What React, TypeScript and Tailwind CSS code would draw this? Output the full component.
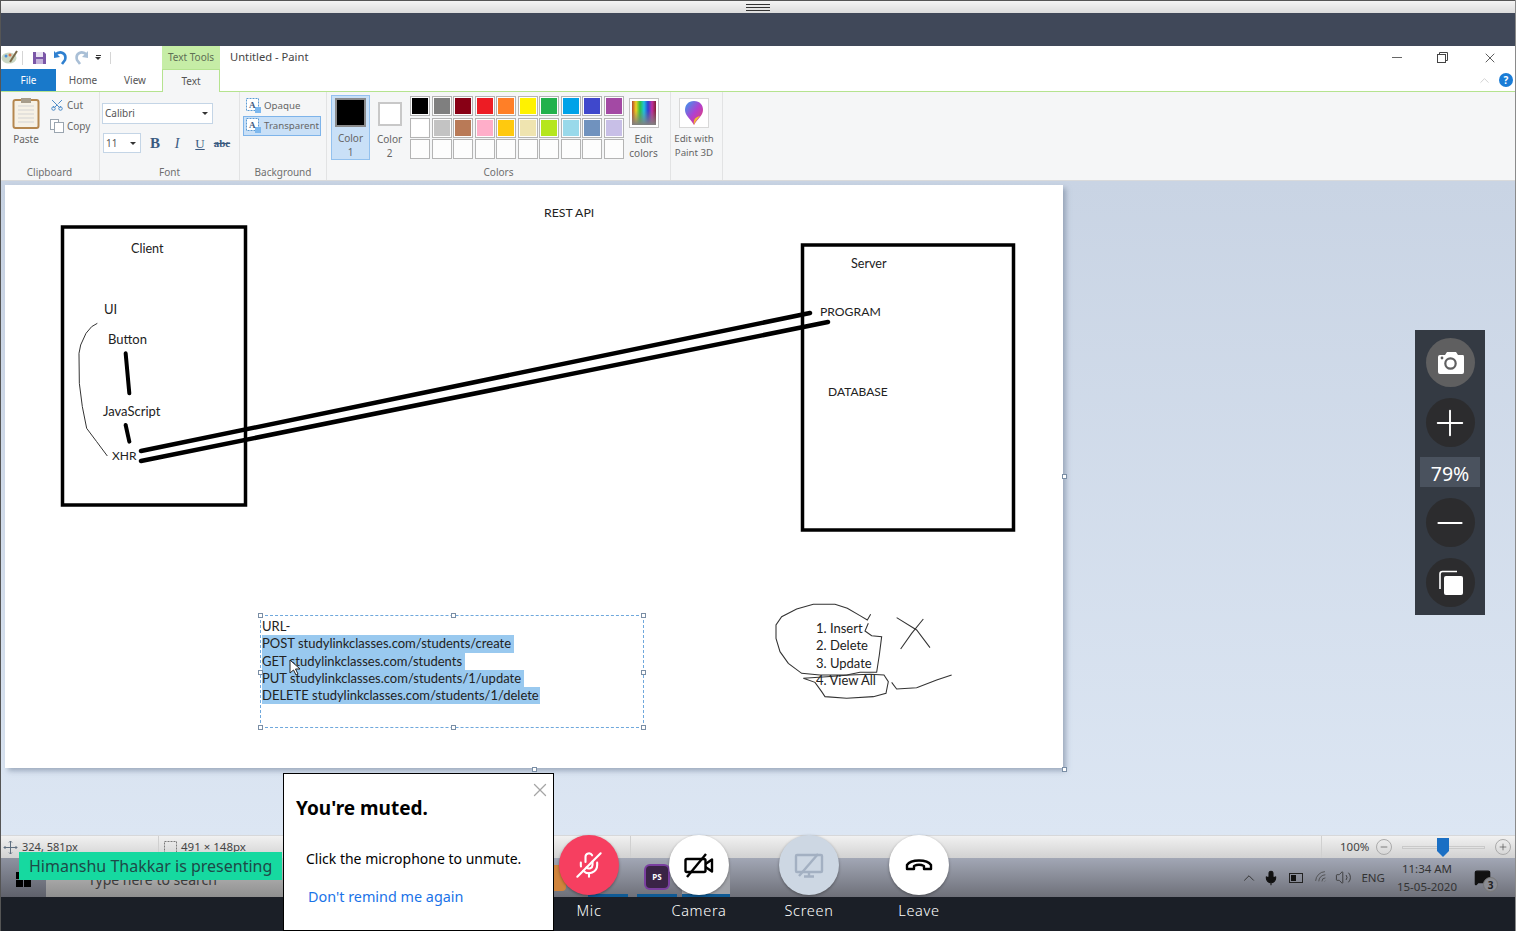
import { MicOff, Plus, Minus, X, Scissors, ChevronUp, Mic, Volume2, Wifi, MessageSquare } from "lucide-react";

const row1 = ["#000000", "#7f7f7f", "#880015", "#ed1c24", "#ff7f27", "#fff200", "#22b14c", "#00a2e8", "#3f48cc", "#a349a4"];
const row2 = ["#ffffff", "#c3c3c3", "#b97a57", "#ffaec9", "#ffc90e", "#efe4b0", "#b5e61d", "#99d9ea", "#7092be", "#c8bfe7"];
const row3 = Array.from({ length: 10 }, () => "");

function Swatch({ color }: { color: string }) {
  return (
    <div className="h-[20px] w-[20px] border border-[#b4b4b4] bg-[#fdfdfd] p-[1px]">
      {color && <div className="h-full w-full" style={{ background: color }}></div>}
    </div>
  );
}

function RibbonGroup({
  label,
  className,
  children,
}: {
  label: string;
  className: string;
  children: React.ReactNode;
}) {
  return (
    <div className={`relative h-full shrink-0 border-r border-[#e2e3e4] ${className}`}>
      <div className="h-[74px]">{children}</div>
      <div className="text-center text-[10px] leading-[13px] text-[#6f6f6f]">{label}</div>
    </div>
  );
}

function AIcon() {
  return (
    <svg width="16" height="16" viewBox="0 0 16 16" className="shrink-0">
      <rect x="0.5" y="0.5" width="12" height="12" fill="#fff" stroke="#5b9bd5" strokeDasharray="2 1" />
      <rect x="9" y="9" width="6" height="6" fill="#7db8ee" />
      <text x="3" y="10" fontSize="9" fontWeight="700" fill="#3d5a80" fontFamily="Liberation Serif">A</text>
    </svg>
  );
}

function TitleBar() {
  return (
    <div className="flex h-[23px] bg-white">
      <div className="flex w-[162px] items-center pl-[1px]">
        <svg width="17" height="15" viewBox="0 0 17 15">
          <ellipse cx="8" cy="8" rx="7.5" ry="5.5" fill="#c9d6c2" />
          <circle cx="5" cy="6" r="1.5" fill="#4a90d9" />
          <circle cx="9" cy="5" r="1.5" fill="#d9734a" />
          <path d="M9 12 L16 1" stroke="#7a6a4a" strokeWidth="2" />
        </svg>
        <div className="ml-[4px] h-[14px] w-[1px] bg-[#d5d5d5]"></div>
        <svg width="15" height="15" viewBox="0 0 15 15" className="ml-[9px]">
          <path d="M1 2 h11 l2 2 v10 h-13 z" fill="#7b57a8" />
          <rect x="4" y="2" width="7" height="5" fill="#e9e2f2" />
          <rect x="4" y="9" width="7" height="5" fill="#c4b3db" />
        </svg>
        <svg width="15" height="15" viewBox="0 0 15 15" className="ml-[6px]">
          <path d="M2 5 C7 0 14 3 12 10 L9 14" fill="none" stroke="#2f80d0" strokeWidth="2.6" />
          <path d="M1 1 L1 8 L7 7 Z" fill="#2f80d0" />
        </svg>
        <svg width="15" height="15" viewBox="0 0 15 15" className="ml-[6px]">
          <path d="M13 5 C8 0 1 3 3 10 L6 14" fill="none" stroke="#a9bfd6" strokeWidth="2.6" />
          <path d="M14 1 L14 8 L8 7 Z" fill="#a9bfd6" />
        </svg>
        <div className="ml-[6px] flex flex-col items-center gap-[1px]">
          <div className="h-[1px] w-[5px] bg-[#333]"></div>
          <div className="h-0 w-0 border-x-[3px] border-t-[3px] border-x-transparent border-t-[#333]"></div>
        </div>
        <div className="ml-[9px] h-[12px] w-[1px] bg-[#d5d5d5]"></div>
      </div>
      <div className="flex w-[58px] items-center justify-center bg-[#c6eda6] text-[10px] text-[#5f6f55]">Text Tools</div>
      <div className="ml-[10px] flex items-center text-[11.2px] text-[#444]">Untitled - Paint</div>
      <div className="ml-auto flex items-center text-[#444]">
        <div className="mr-[35px] h-[1px] w-[10px] bg-[#666]"></div>
        <svg width="11" height="11" viewBox="0 0 11 11" className="mr-[34px]" fill="none" stroke="#444">
          <rect x="0.5" y="2.5" width="8" height="8" />
          <path d="M2.5 2.5 v-2 h8 v8 h-2" />
        </svg>
        <X size={16} strokeWidth={1.3} className="mr-[18px]" />
      </div>
    </div>
  );
}

function TabRow() {
  return (
    <div className="flex h-[23px] border-b border-[#b5e38f] bg-white text-[10px] text-[#555]">
      <div className="ml-[1px] flex h-[22px] w-[55px] items-center justify-center bg-[#1979ca] text-white">File</div>
      <div className="flex w-[54px] items-center justify-center">Home</div>
      <div className="flex w-[50px] items-center justify-center">View</div>
      <div className="ml-[2px] flex h-[23px] w-[58px] items-center justify-center border-x border-t border-x-[#b5e38f] border-t-[#b5e38f] bg-[#f5f6f7]">
        Text
      </div>
      <div className="ml-auto flex items-center">
        <ChevronUp size={15} strokeWidth={1.2} className="mr-[7px] text-[#c4c4c4]" />
        <div className="mr-[3px] flex h-[14px] w-[14px] items-center justify-center rounded-full bg-[#1a7cd6] text-[10px] font-bold text-white">
          ?
        </div>
      </div>
    </div>
  );
}

function Ribbon() {
  return (
    <div className="flex h-[89px] border-b border-[#d9dadb] bg-[#f5f6f7] text-[10px] text-[#666]">
      <RibbonGroup label="Clipboard" className="w-[100px]">
        <div className="flex">
          <div className="ml-[12px] flex w-[28px] flex-col items-center pt-[5px]">
            <svg width="28" height="32" viewBox="0 0 28 32">
              <rect x="1.5" y="3" width="25" height="28" rx="2" fill="#f6f1e6" stroke="#b5874f" strokeWidth="2" />
              <path d="M6 9 h16 M6 13 h16 M6 17 h16 M6 21 h16 M6 25 h16" stroke="#d3d3d3" />
              <rect x="9" y="1" width="10" height="5" fill="#a79d8c" />
            </svg>
            <div className="mt-[4px] whitespace-nowrap leading-[13px]">Paste</div>
          </div>
          <div className="ml-[10px] flex flex-col gap-[7px] pt-[6px]">
            <div className="flex items-center gap-[3px] leading-[14px]">
              <Scissors size={14} strokeWidth={1.6} className="rotate-[-90deg] text-[#3f82c4]" />
              Cut
            </div>
            <div className="flex items-center gap-[3px] leading-[14px]">
              <svg width="14" height="14" viewBox="0 0 14 14" fill="#fff" stroke="#9aa5b0">
                <rect x="0.5" y="0.5" width="8" height="10" />
                <rect x="4.5" y="3.5" width="9" height="10" />
              </svg>
              Copy
            </div>
          </div>
        </div>
      </RibbonGroup>
      <RibbonGroup label="Font" className="w-[140px]">
        <div className="ml-[2px] pt-[11px]">
          <div className="flex h-[21px] w-[111px] items-center justify-between border border-[#c4d5e6] bg-white px-[2px] text-[#555]">
            Calibri
            <div className="mr-[2px] h-0 w-0 border-x-[3px] border-t-[3px] border-x-transparent border-t-[#333]"></div>
          </div>
          <div className="mt-[8px] flex items-center">
            <div className="ml-[1px] flex h-[20px] w-[38px] items-center justify-between border border-[#c4d5e6] bg-white px-[2px] text-[#555]">
              11
              <div className="mr-[2px] h-0 w-0 border-x-[3px] border-t-[3px] border-x-transparent border-t-[#333]"></div>
            </div>
            <div className="ml-[7px] w-[14px] text-center font-['Liberation_Serif',serif] text-[15px] font-bold text-[#3a5a80]">B</div>
            <div className="ml-[8px] w-[14px] text-center font-['Liberation_Serif',serif] text-[14px] italic text-[#3a5a80]">I</div>
            <div className="ml-[9px] w-[14px] text-center font-['Liberation_Serif',serif] text-[13px] text-[#3a5a80] underline">U</div>
            <div className="ml-[6px] w-[18px] text-center font-['Liberation_Serif',serif] text-[11px] font-bold text-[#3a5a80] line-through">abc</div>
          </div>
        </div>
      </RibbonGroup>
      <RibbonGroup label="Background" className="w-[87px]">
        <div className="pl-[3px] pt-[5px] text-[9.7px]">
          <div className="flex h-[18px] items-center gap-[2px] pl-[3px]">
            <AIcon />
            Opaque
          </div>
          <div className="mt-[1px] flex h-[20px] w-[78px] items-center gap-[2px] border border-[#7eb4ea] bg-[#c9e0f7] pl-[2px]">
            <AIcon />
            <span className="whitespace-nowrap">Transparent</span>
          </div>
        </div>
      </RibbonGroup>
      <RibbonGroup label="Colors" className="w-[344px]">
        <div className="flex pl-[4px] pt-[3px]">
          <div className="flex h-[65px] w-[39px] flex-col items-center border border-[#93c1ee] bg-[#c9e0f7] pt-[2px]">
            <div className="h-[31px] w-[31px] border-2 border-[#8a8a8a] bg-black"></div>
            <div className="mt-[4px] text-center leading-[14px]">
              Color
              <br />1
            </div>
          </div>
          <div className="ml-[7px] flex w-[25px] flex-col items-center pt-[7px]">
            <div className="h-[24px] w-[24px] border-2 border-[#c8c8c8] bg-white"></div>
            <div className="mt-[6px] text-center leading-[14px]">
              Color
              <br />2
            </div>
          </div>
          <div className="ml-[8px] flex w-[214px] flex-col gap-[1.5px] pt-[1px]">
            {[row1, row2, row3].map((row, i) => (
              <div key={i} className="flex justify-between">
                {row.map((c, j) => (
                  <Swatch key={j} color={c} />
                ))}
              </div>
            ))}
          </div>
          <div className="ml-[4px] flex w-[31px] flex-col items-center pt-[3px]">
            <div className="h-[30px] w-[30px] border border-[#c0c0c0] bg-white p-[2px]">
              <div className="h-full w-full bg-[linear-gradient(to_bottom,transparent_0%,transparent_40%,#808080_100%),linear-gradient(to_right,#b5482a,#f0d020,#30c040,#20c0e0,#3040d0,#c030a0,#802030)]"></div>
            </div>
            <div className="mt-[4px] text-center leading-[14px]">
              Edit
              <br />
              colors
            </div>
          </div>
        </div>
      </RibbonGroup>
      <RibbonGroup label="" className="w-[52px]">
        <div className="flex flex-col items-center pr-[5px] pt-[6px]">
          <div className="flex h-[30px] w-[30px] items-center justify-center border border-[#d8d8d8] bg-white">
            <svg width="20" height="26" viewBox="0 0 20 26">
              <defs>
                <linearGradient id="drop" x1="0" y1="0" x2="1" y2="1">
                  <stop offset="0" stopColor="#30a0f0" />
                  <stop offset="0.5" stopColor="#b040d0" />
                  <stop offset="1" stopColor="#f04060" />
                </linearGradient>
              </defs>
              <path d="M10 1 C16 1 19 5 19 10 C19 16 13 19 10 25 C7 19 1 16 1 10 C1 5 4 1 10 1 Z" fill="url(#drop)" />
              <path d="M10 25 C9 20 11 17 16 16 C14 19 11 21 10 25 Z" fill="#f0c030" />
            </svg>
          </div>
          <div className="mt-[4px] whitespace-nowrap text-center text-[9.7px] leading-[14px]">
            Edit with
            <br />
            Paint 3D
          </div>
        </div>
      </RibbonGroup>
    </div>
  );
}

function Label({ className, children }: { className: string; children: React.ReactNode }) {
  return <div className={`absolute whitespace-nowrap leading-[17px] text-[#222] ${className}`}>{children}</div>;
}

function Handle({ className }: { className: string }) {
  return <div className={`absolute h-[5px] w-[5px] border border-[#7a8ea5] bg-white ${className}`}></div>;
}

function Sheet() {
  return (
    <div className="relative ml-[5px] mt-[4px] h-[583px] w-[1058px] bg-white font-['Lato',sans-serif] shadow-[3px_3px_5px_rgba(110,125,150,0.55)]">
      <svg className="absolute left-0 top-0 h-[583px] w-[1058px]" viewBox="5 185 1058 583" fill="none">
        <rect x="62.5" y="227" width="183" height="278" stroke="#000" strokeWidth="3.5" />
        <rect x="802.5" y="245" width="211" height="285" stroke="#000" strokeWidth="3.5" />
        <path d="M141 451 L810 313" stroke="#000" strokeWidth="4.5" strokeLinecap="round" />
        <path d="M141 461 L828 322" stroke="#000" strokeWidth="4.5" strokeLinecap="round" />
        <g transform="translate(50 220) scale(0.3333)">
          <path d="M227 400 L238 520" stroke="#000" strokeWidth="12" strokeLinecap="round" />
          <path d="M227 615 L238 665" stroke="#000" strokeWidth="12" strokeLinecap="round" />
          <path
            d="M142 310 L125 320 L108 340 L92 375 L87 400 L88 490 L97 560 L110 625 L140 665 L172 708"
            stroke="#333"
            strokeWidth="3"
          />
        </g>
        <g transform="translate(760 595) scale(0.3333)" stroke="#333" strokeWidth="3.2">
          <path d="M332 58 L322 75 L300 62 L262 40 L225 28 L160 28 L110 42 L65 65 L48 90 L48 130 L60 170 L85 205 L125 235 L180 240 L260 240 L300 232 L350 232 L358 180 L365 125 L335 122 L315 108 L325 85" />
          <path d="M130 250 L165 262 L185 290 L195 305 L260 310 L340 305 L378 295 L385 260 L372 240 L330 238 L270 240 L200 245 Z" />
          <path d="M410 68 L470 105 L510 158" />
          <path d="M490 72 L455 115 L422 162" />
          <path d="M395 262 L410 282 L470 278 L530 255 L575 240" />
        </g>
      </svg>

      <Label className="left-[539px] top-[19px] text-[12.3px]">REST API</Label>
      <Label className="left-[126px] top-[55px] text-[12.6px]">Client</Label>
      <Label className="left-[99px] top-[116px] text-[13px]">UI</Label>
      <Label className="left-[103px] top-[146px] text-[13px]">Button</Label>
      <Label className="left-[98px] top-[218px] text-[13px]">JavaScript</Label>
      <Label className="left-[107px] top-[262px] text-[12px]">XHR</Label>
      <Label className="left-[846px] top-[70px] text-[12.6px]">Server</Label>
      <Label className="left-[815px] top-[118px] text-[12.2px]">PROGRAM</Label>
      <Label className="left-[823px] top-[198px] text-[12px]">DATABASE</Label>

      <div className="absolute left-[255px] top-[430px] h-[113px] w-[384px] border border-dashed border-[#6fa8dc] pl-[1px] pt-[2px] text-[13px] leading-[17.3px] text-[#222]">
        <div>URL-</div>
        <div className="w-[252px] whitespace-nowrap bg-[#99c9ef]">POST studylinkclasses.com/students/create</div>
        <div className="w-[203px] whitespace-nowrap bg-[#99c9ef]">GET studylinkclasses.com/students</div>
        <div className="w-[262px] whitespace-nowrap bg-[#99c9ef]">PUT studylinkclasses.com/students/1/update</div>
        <div className="w-[278px] whitespace-nowrap bg-[#99c9ef]">DELETE studylinkclasses.com/students/1/delete</div>
        <svg width="14" height="18" viewBox="0 0 14 18" className="absolute left-[28px] top-[43px]">
          <path d="M1 1 L1 14 L4.5 11 L7 16 L9 15 L6.5 10 L11 10 Z" fill="#fff" stroke="#222" strokeWidth="1" />
        </svg>
        <Handle className="-left-[3px] -top-[3px]" />
        <Handle className="left-[190px] -top-[3px]" />
        <Handle className="-right-[3px] -top-[3px]" />
        <Handle className="-left-[3px] top-[54px]" />
        <Handle className="-right-[3px] top-[54px]" />
        <Handle className="-bottom-[3px] -left-[3px]" />
        <Handle className="-bottom-[3px] left-[190px]" />
        <Handle className="-bottom-[3px] -right-[3px]" />
      </div>

      <div className="absolute left-[811px] top-[435px] text-[13px] leading-[17.3px] text-[#222]">
        <div>1. Insert</div>
        <div>2. Delete</div>
        <div>3. Update</div>
        <div>4. View All</div>
      </div>

      <Handle className="-right-[4px] top-[289px]" />
      <Handle className="-bottom-[4px] left-[527px]" />
      <Handle className="-bottom-[4px] -right-[4px]" />
    </div>
  );
}

function StatusBar() {
  return (
    <div className="flex h-[23px] items-center border-t border-[#d7d8da] bg-[linear-gradient(to_bottom,#f1f1f1,#d2d2d2)] text-[11.5px] text-[#444]">
      <div className="flex h-full w-[159px] items-center border-r border-[#d0d0d0] pl-[3px]">
        <svg width="15" height="15" viewBox="0 0 15 15" fill="none" stroke="#5f6f80" strokeWidth="1">
          <path d="M7.5 1 V14 M1 7.5 H14 M6 2.5 L7.5 1 L9 2.5 M6 12.5 L7.5 14 L9 12.5 M2.5 6 L1 7.5 L2.5 9 M12.5 6 L14 7.5 L12.5 9" />
        </svg>
        <span className="ml-[4px] text-[11px]">324, 581px</span>
      </div>
      <div className="flex h-full w-[472px] items-center border-r border-[#d0d0d0] pl-[4px]">
        <svg width="15" height="15" viewBox="0 0 15 15" fill="none" stroke="#7a7a7a">
          <rect x="1.5" y="1.5" width="12" height="12" strokeDasharray="2 1" />
        </svg>
        <span className="ml-[3px]">491 × 148px</span>
      </div>
      <div className="ml-[690px] flex h-full items-center border-l border-[#d0d0d0] pl-[18px]">
        <span className="w-[33px]">100%</span>
        <div className="ml-[3px] flex h-[16px] w-[16px] items-center justify-center rounded-full border border-[#aaa]">
          <Minus size={10} strokeWidth={1.5} />
        </div>
        <div className="relative ml-[10px] h-[3px] w-[83px] border border-[#c9c9c9] bg-[#e2e2e2]">
          <svg width="12" height="19" viewBox="0 0 12 19" className="absolute -top-[9px] left-[34px]">
            <path d="M0 0 H12 V13 L6 19 L0 13 Z" fill="#1a6fc4" />
          </svg>
        </div>
        <div className="ml-[10px] flex h-[16px] w-[16px] items-center justify-center rounded-full border border-[#aaa]">
          <Plus size={10} strokeWidth={1.5} />
        </div>
      </div>
    </div>
  );
}

function Taskbar() {
  return (
    <div className="flex h-[39px] bg-[linear-gradient(to_bottom,#a2a7b5,#6e7079)]">
      <div className="flex w-[46px] items-center justify-center bg-[linear-gradient(to_bottom,#8d92a0,#5f616b)] pt-[4px]">
        <div className="grid grid-cols-2 gap-[1px]">
          <div className="h-[7px] w-[7px] bg-black"></div>
          <div className="h-[7px] w-[7px] bg-black"></div>
          <div className="h-[7px] w-[7px] bg-black"></div>
          <div className="h-[7px] w-[7px] bg-black"></div>
        </div>
      </div>
      <div className="flex w-[507px] items-center bg-[linear-gradient(to_bottom,#c3c3c3,#8f8f8f)] pl-[42px] pt-[4px] font-['Noto_Sans',sans-serif] text-[14px] text-[#3a3a3a]">
        Type here to search
      </div>
      <div className="flex w-[35px] items-center justify-center">
        <div className="h-[26px] w-[25px] -translate-x-[17px] rounded-[4px] bg-[#d0843c]"></div>
      </div>
      <div className="mt-auto h-[3px] w-[40px] bg-[#0f5a94]"></div>
      <div className="w-[9px]"></div>
      <div className="relative mt-auto h-[3px] w-[40px] bg-[#0f5a94]">
        <div className="absolute -top-[28px] left-[9px] flex h-[22px] w-[22px] items-center justify-center rounded-[4px] bg-[#3a2446] text-[8px] font-bold text-white shadow-[0_0_0_2px_#7a3fa0]">
          PS
        </div>
      </div>
      <div className="w-[5px]"></div>
      <div className="mt-auto h-full w-[48px] border-b-[3px] border-[#0f5a94] bg-[#a0a2a8]"></div>
      <div className="ml-auto flex items-center font-['Noto_Sans',sans-serif] text-[11.5px] text-[#333]">
        <ChevronUp size={18} strokeWidth={1.3} className="mr-[5px]" />
        <Mic size={16} fill="#111" strokeWidth={1.6} className="mr-[10px] text-[#111]" />
        <svg width="15" height="10" viewBox="0 0 15 10" className="mr-[10px]">
          <rect x="0.5" y="0.5" width="13" height="9" fill="none" stroke="#222" />
          <rect x="2" y="2" width="5" height="6" fill="#111" />
        </svg>
        <Wifi size={15} strokeWidth={1.2} className="mr-[6px] rotate-[-45deg] text-[#444]" />
        <Volume2 size={17} strokeWidth={1.2} className="mr-[9px] text-[#333]" />
        <span className="mr-[12px]">ENG</span>
        <div className="mr-[17px] text-center text-[11.5px] leading-[18px]">
          <div>11:34 AM</div>
          <div>15-05-2020</div>
        </div>
        <div className="relative mr-[25px]">
          <MessageSquare size={17} fill="#111" className="text-[#111]" />
          <div className="absolute -bottom-[6px] -right-[7px] flex h-[15px] w-[15px] items-center justify-center rounded-full border border-[#777] bg-[#8a8c93] text-[10px] font-bold leading-none text-[#222]">
            3
          </div>
        </div>
      </div>
    </div>
  );
}

function ZoomPanel() {
  return (
    <div className="absolute left-[1415px] top-[330px] flex h-[285px] w-[70px] flex-col items-center bg-[#343a43] pt-[8px]">
      <div className="flex h-[49px] w-[49px] items-center justify-center rounded-full bg-[#5f5f60]">
        <svg width="28" height="22" viewBox="0 0 28 22" className="translate-x-[1px]">
          <path d="M1 5 Q1 3 3 3 H8 L10 0 H19 L21 3 H26 Q27 3 27 5 V20 Q27 22 25 22 H3 Q1 22 1 20 Z" fill="#fff" />
          <circle cx="13.5" cy="11.5" r="5.2" fill="none" stroke="#5f5f60" strokeWidth="2.2" />
          <circle cx="5" cy="6" r="1.4" fill="#5f5f60" />
        </svg>
      </div>
      <div className="mt-[11px] flex h-[49px] w-[49px] items-center justify-center rounded-full bg-[#2c2c2e]">
        <Plus size={42} strokeWidth={1.1} className="text-white" />
      </div>
      <div className="mt-[10px] flex h-[30px] w-[60px] items-center justify-center bg-[#4a525e] pt-[3px] font-['Noto_Sans',sans-serif] text-[19.5px] text-white">
        79%
      </div>
      <div className="mt-[11px] flex h-[49px] w-[49px] items-center justify-center rounded-full bg-[#2c2c2e]">
        <Minus size={40} strokeWidth={1.1} className="text-white" />
      </div>
      <div className="mt-[11px] flex h-[49px] w-[49px] items-center justify-center rounded-full bg-[#2c2c2e]">
        <svg width="26" height="26" viewBox="0 0 26 26" className="translate-x-[1px]">
          <path d="M2 19 V4 Q2 1.5 4.5 1.5 H19" fill="none" stroke="#fff" strokeWidth="1.6" />
          <rect x="6" y="6" width="19" height="19" rx="2" fill="#fff" />
        </svg>
      </div>
    </div>
  );
}

function MutedDialog() {
  return (
    <div className="absolute left-[283px] top-[773px] h-[158px] w-[271px] border border-black bg-white font-['Noto_Sans',sans-serif]">
      <X size={22} strokeWidth={1.4} className="absolute right-[2px] top-[5px] text-[#a5a5a5]" />
      <div className="pl-[12px] pt-[20px] text-[19px] font-bold leading-[28px] text-black">You're muted.</div>
      <div className="pl-[22px] pt-[27px] text-[14px] leading-[20px] text-black">Click the microphone to unmute.</div>
      <div className="pl-[24px] pt-[18px] text-[14.4px] leading-[20px] text-[#1a73e8]">Don't remind me again</div>
    </div>
  );
}

function CallButton({
  label,
  className,
  children,
}: {
  label: string;
  className: string;
  children: React.ReactNode;
}) {
  return (
    <div className="flex w-[60px] flex-col items-center">
      <div className={`flex h-[60px] w-[60px] items-center justify-center rounded-full shadow-[0_1px_3px_rgba(0,0,0,0.35)] ${className}`}>
        {children}
      </div>
      <div className="mt-[5px] whitespace-nowrap text-[14.5px] font-light leading-[20px] tracking-[0.7px] text-white">{label}</div>
    </div>
  );
}

function CallControls() {
  return (
    <div className="absolute left-[559px] top-[835px] flex gap-[50px] font-['Noto_Sans',sans-serif]">
      <CallButton label="Mic" className="bg-[#f63f60]">
        <MicOff size={28} strokeWidth={1.8} className="-scale-x-100 text-white" />
      </CallButton>
      <CallButton label="Camera" className="bg-white">
        <svg width="30" height="25" viewBox="0 0 30 25" fill="none" stroke="#000" strokeWidth="2.4" strokeLinejoin="round">
          <rect x="1.5" y="6" width="20" height="13" rx="1.5" />
          <path d="M21.5 11 L28 6.5 V18.5 L21.5 14" />
          <path d="M3 24 L22 1" />
        </svg>
      </CallButton>
      <CallButton label="Screen" className="bg-[#cdd7e3]">
        <svg width="30" height="25" viewBox="0 0 30 25" fill="none" stroke="#a3b0c2" strokeWidth="2.4" strokeLinejoin="round">
          <rect x="2" y="2" width="26" height="17" rx="1" />
          <path d="M15 19 V23 M10 23.5 H20" />
          <path d="M5 23 L24 1" />
        </svg>
      </CallButton>
      <CallButton label="Leave" className="bg-white">
        <svg width="28" height="12" viewBox="0 0 28 12" fill="none" stroke="#000" strokeWidth="2.4" strokeLinejoin="round">
          <path d="M2 10 V6 C6 0 22 0 26 6 V10 H19 V7 C16 5.5 12 5.5 9 7 V10 Z" />
        </svg>
      </CallButton>
    </div>
  );
}

export default function App() {
  return (
    <div className="relative h-[931px] w-[1516px] overflow-hidden font-['Noto_Sans',sans-serif]">
      <div className="flex h-[13px] items-center justify-center border-t border-[#555] bg-[linear-gradient(to_bottom,#f4f4f4,#dcdcdc)]">
        <div className="flex w-[24px] flex-col gap-[2px]">
          <div className="h-[1px] bg-[#333]"></div>
          <div className="h-[1px] bg-[#333]"></div>
          <div className="h-[1px] bg-[#333]"></div>
        </div>
      </div>
      <div className="h-[33px] bg-[#404859]"></div>
      <TitleBar />
      <TabRow />
      <Ribbon />
      <div className="h-[654px] overflow-hidden bg-[linear-gradient(to_bottom,#c9d4e4,#dce6f3)]">
        <Sheet />
      </div>
      <StatusBar />
      <Taskbar />
      <div className="h-[34px] bg-[#1b1f27]"></div>

      <div className="absolute left-0 top-0 h-[931px] w-[1px] bg-[#555]"></div>
      <div className="absolute right-0 top-0 h-[931px] w-[1px] bg-[#8a8a8a]"></div>
      <ZoomPanel />
      <div className="absolute left-[19px] top-[852px] flex h-[28px] w-[263px] items-center bg-[#16d9a0] pl-[10px] text-[16px] text-[#1e4a48]">
        Himanshu Thakkar is presenting
      </div>
      <MutedDialog />
      <CallControls />
    </div>
  );
}
